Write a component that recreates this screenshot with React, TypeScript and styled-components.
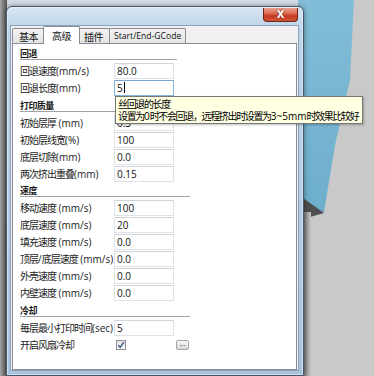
import React from "react";
import styled, { createGlobalStyle } from "styled-components";

const GlobalStyle = createGlobalStyle`
  html, body {
    margin: 0;
    padding: 0;
    background: #c9c9c9;
    overflow: hidden;
  }
  body {
    font-family: "Open Sans", "Noto Sans CJK SC", sans-serif;
    font-size: 10px;
    color: #1b1b1b;
  }
`;

const Desktop = styled.div`
  position: relative;
  width: 374px;
  height: 376px;
  overflow: hidden;
`;

const Backdrop = styled.svg`
  position: absolute;
  left: 0;
  top: 0;
`;

const Window = styled.div`
  position: absolute;
  left: 6px;
  top: 6px;
  width: 298px;
  height: 370px;
  box-sizing: border-box;
  display: flex;
  flex-direction: column;
  padding: 0 4px 4px 3px;
  border: 1px solid #44586d;
  border-radius: 6px 6px 0 0;
  background: linear-gradient(180deg, #d6e5f2 0%, #bed4e9 6%, #b4cce3 55%, #a8c3dc 100%);
  box-shadow: 0 0 5px rgba(0, 0, 0, 0.45), inset 0 0 0 1px rgba(255, 255, 255, 0.45);
`;

const TitleBar = styled.div`
  height: 18px;
  flex: none;
  display: flex;
  justify-content: flex-end;
  align-items: flex-start;
`;

const CloseButton = styled.div`
  width: 35px;
  height: 14px;
  margin-top: 1px;
  margin-right: 1px;
  box-sizing: border-box;
  display: flex;
  align-items: center;
  justify-content: center;
  border: 1px solid #6f2317;
  border-top: 0;
  border-radius: 0 0 4px 4px;
  background: linear-gradient(180deg, #eba28f 0%, #d9644c 45%, #c43a22 60%, #d0553b 100%);
  color: #fff;
  font-family: "DejaVu Sans", sans-serif;
  font-weight: bold;
  font-size: 10px;
  line-height: 10px;
  text-shadow: 0 0 2px #5a1208;
`;

const Client = styled.div`
  flex: 1;
  display: flex;
  flex-direction: column;
  padding: 0 1px;
  background: #f0f0f0;
  border: 1px solid #8aa2ba;
`;

const TabStrip = styled.div`
  height: 17px;
  flex: none;
  display: flex;
  align-items: flex-end;
`;

const Tab = styled.div<{ $active?: boolean; $latin?: boolean }>`
  height: ${(p) => (p.$active ? 18 : 15)}px;
  box-sizing: border-box;
  display: flex;
  align-items: center;
  padding: 0 ${(p) => (p.$active ? 8 : p.$latin ? 4 : 6)}px;
  margin: 0 ${(p) => (p.$active ? -2 : 0)}px ${(p) => (p.$active ? -1 : 0)}px;
  margin-left: ${(p) => (p.$active ? -2 : -1)}px;
  position: relative;
  z-index: ${(p) => (p.$active ? 2 : 1)};
  border: 1px solid #898c95;
  border-bottom: 0;
  border-radius: 2px 2px 0 0;
  background: ${(p) => (p.$active ? "#fff" : "linear-gradient(180deg, #f3f3f3, #e4e4e4)")};
  font-size: ${(p) => (p.$latin ? 8.6 : 10)}px;
  white-space: nowrap;
  color: #111;

  &:first-child {
    margin-left: 0;
  }
`;

const Panel = styled.div`
  flex: 1;
  background: #fff;
  border: 1px solid #898c95;
  padding: 1px 7px 0;
`;

const Section = styled.div<{ $top?: number }>`
  margin-top: ${(p) => p.$top ?? 0}px;
`;

const Head = styled.div<{ $w: number }>`
  width: ${(p) => p.$w}px;
  padding-top: 4px;
  margin-bottom: 2px;
  line-height: 10px;
  border-bottom: 1px solid #a4a4a4;
  box-shadow: 0 1px 0 #fff;
  font-weight: bold;
  font-size: 9px;
  color: #1a1a1a;
`;

const Row = styled.div`
  display: grid;
  grid-template-columns: 94px 60px auto;
  align-items: center;
  height: 17px;
`;

const Label = styled.div`
  white-space: nowrap;
  line-height: 12px;
  color: #222;
`;

const Field = styled.div<{ $focused?: boolean }>`
  height: 16px;
  box-sizing: border-box;
  display: flex;
  align-items: center;
  padding: 0 2px;
  background: #fff;
  border: 1px solid ${(p) => (p.$focused ? "#8db4dc" : "#dde2e8")};
  border-top-color: ${(p) => (p.$focused ? "#7aa6d4" : "#cfd5dc")};
  color: #111;
`;

const Caret = styled.span`
  display: inline-block;
  width: 1px;
  height: 11px;
  margin-left: 1px;
  background: #000;
`;

const Check = styled.div`
  width: 10px;
  height: 10px;
  margin-left: 2px;
  box-sizing: border-box;
  border: 1px solid #8e9094;
  background: linear-gradient(180deg, #e1e3e6, #fbfbfb);
  display: flex;
  align-items: center;
  justify-content: center;
`;

const SmallButton = styled.div`
  width: 13px;
  height: 10px;
  margin-left: 2px;
  box-sizing: border-box;
  border: 1px solid #a2a4a8;
  border-radius: 2px;
  background: linear-gradient(180deg, #f7f7f7, #d8d8d8);
  font-size: 7px;
  line-height: 5px;
  text-align: center;
  color: #333;
`;

const Tooltip = styled.div`
  position: absolute;
  left: 115px;
  top: 96px;
  width: 248px;
  box-sizing: border-box;
  padding: 1px 2px;
  background: #ffffe1;
  border: 1px solid #767676;
  box-shadow: 1px 1px 2px rgba(0, 0, 0, 0.25);
  line-height: 11px;
  white-space: nowrap;
  color: #000;
`;

const Han = styled.span<{ $tight?: number }>`
  font-family: "Noto Sans CJK SC", sans-serif;
  letter-spacing: ${(p) => p.$tight ?? -1}px;
`;

const CJK = /([\u3000-\u303f\u4e00-\u9fff\uff00-\uffef]+)/;

const Txt = ({ s, tight }: { s: string; tight?: number }) => (
  <>
    {s.split(CJK).map((part, i) =>
      i % 2 ? (
        <Han key={i} $tight={tight}>
          {part}
        </Han>
      ) : (
        part
      )
    )}
  </>
);

type Item = [string, string];

const quality: Item[] = [
  ["初始层厚 (mm)", "0.3"],
  ["初始层线宽(%)", "100"],
  ["底层切除(mm)", "0.0"],
  ["两次挤出重叠(mm)", "0.15"],
];

const speed: Item[] = [
  ["移动速度 (mm/s)", "100"],
  ["底层速度 (mm/s)", "20"],
  ["填充速度 (mm/s)", "0.0"],
  ["顶层/底层速度 (mm/s)", "0.0"],
  ["外壳速度 (mm/s)", "0.0"],
  ["内壁速度 (mm/s)", "0.0"],
];

const FieldRow = ({ label, value }: { label: string; value: string }) => (
  <Row>
    <Label>
      <Txt s={label} />
    </Label>
    <Field>{value}</Field>
  </Row>
);

const Header = ({ title, w }: { title: string; w: number }) => (
  <Head $w={w}>
    <Txt s={title} tight={-0.6} />
  </Head>
);

const App: React.FC = () => {
  return (
    <Desktop>
      <GlobalStyle />
      <Backdrop width="374" height="376" viewBox="0 0 374 376">
        <defs>
          <linearGradient id="sky" x1="0" y1="0" x2="0" y2="1">
            <stop offset="0" stopColor="#82bdd7" />
            <stop offset="1" stopColor="#6daecd" />
          </linearGradient>
          <linearGradient id="leftShade" x1="0" y1="0" x2="1" y2="0">
            <stop offset="0" stopColor="#a3a3a3" />
            <stop offset="1" stopColor="#555" />
          </linearGradient>
          <linearGradient id="rightShade" x1="0" y1="0" x2="1" y2="0">
            <stop offset="0" stopColor="#6e6e6e" />
            <stop offset="1" stopColor="#c9c9c9" />
          </linearGradient>
        </defs>
        <rect width="374" height="376" fill="#c9c9c9" />
        <rect width="302" height="8" fill="#d4dde5" />
        <polygon points="298,0 354,0 350,80 335,145 324,212 298,212" fill="url(#sky)" />
        <polygon points="303,198 324,213 303,219" fill="#4e4e4e" />
        <rect x="303" y="212" width="8" height="164" fill="url(#rightShade)" />
        <rect x="0" y="0" width="7" height="376" fill="url(#leftShade)" />
      </Backdrop>

      <Window>
        <TitleBar>
          <CloseButton>X</CloseButton>
        </TitleBar>
        <Client>
          <TabStrip>
            <Tab>
              <Txt s="基本" tight={-0.5} />
            </Tab>
            <Tab $active>
              <Txt s="高级" tight={-0.5} />
            </Tab>
            <Tab>
              <Txt s="插件" tight={-0.5} />
            </Tab>
            <Tab $latin>Start/End-GCode</Tab>
          </TabStrip>
          <Panel>
            <Section>
              <Header title="回退" w={157} />
              <FieldRow label="回退速度(mm/s)" value="80.0" />
              <Row>
                <Label>
                  <Txt s="回退长度(mm)" />
                </Label>
                <Field $focused>
                  5<Caret />
                </Field>
              </Row>
            </Section>

            <Section $top={1}>
              <Header title="打印质量" w={170} />
              {quality.map(([l, v]) => (
                <FieldRow key={l} label={l} value={v} />
              ))}
            </Section>

            <Section>
              <Header title="速度" w={170} />
              {speed.map(([l, v]) => (
                <FieldRow key={l} label={l} value={v} />
              ))}
            </Section>

            <Section $top={1}>
              <Header title="冷却" w={170} />
              <FieldRow label="每层最小打印时间(sec)" value="5" />
              <Row>
                <Label>
                  <Txt s="开启风扇冷却" />
                </Label>
                <Check>
                  <svg width="8" height="8" viewBox="0 0 8 8">
                    <path d="M1.2 4.2 L3.2 6.4 L6.8 1.2" fill="none" stroke="#3e5488" strokeWidth="1.4" />
                  </svg>
                </Check>
                <SmallButton>...</SmallButton>
              </Row>
            </Section>
          </Panel>
        </Client>
      </Window>

      <Tooltip>
        <Txt s="丝回退的长度" tight={-1.35} />
        <br />
        <Txt s="设置为0时不会回退，远程挤出时设置为3~5mm时效果比较好" tight={-1.35} />
      </Tooltip>
    </Desktop>
  );
};

export default App;
